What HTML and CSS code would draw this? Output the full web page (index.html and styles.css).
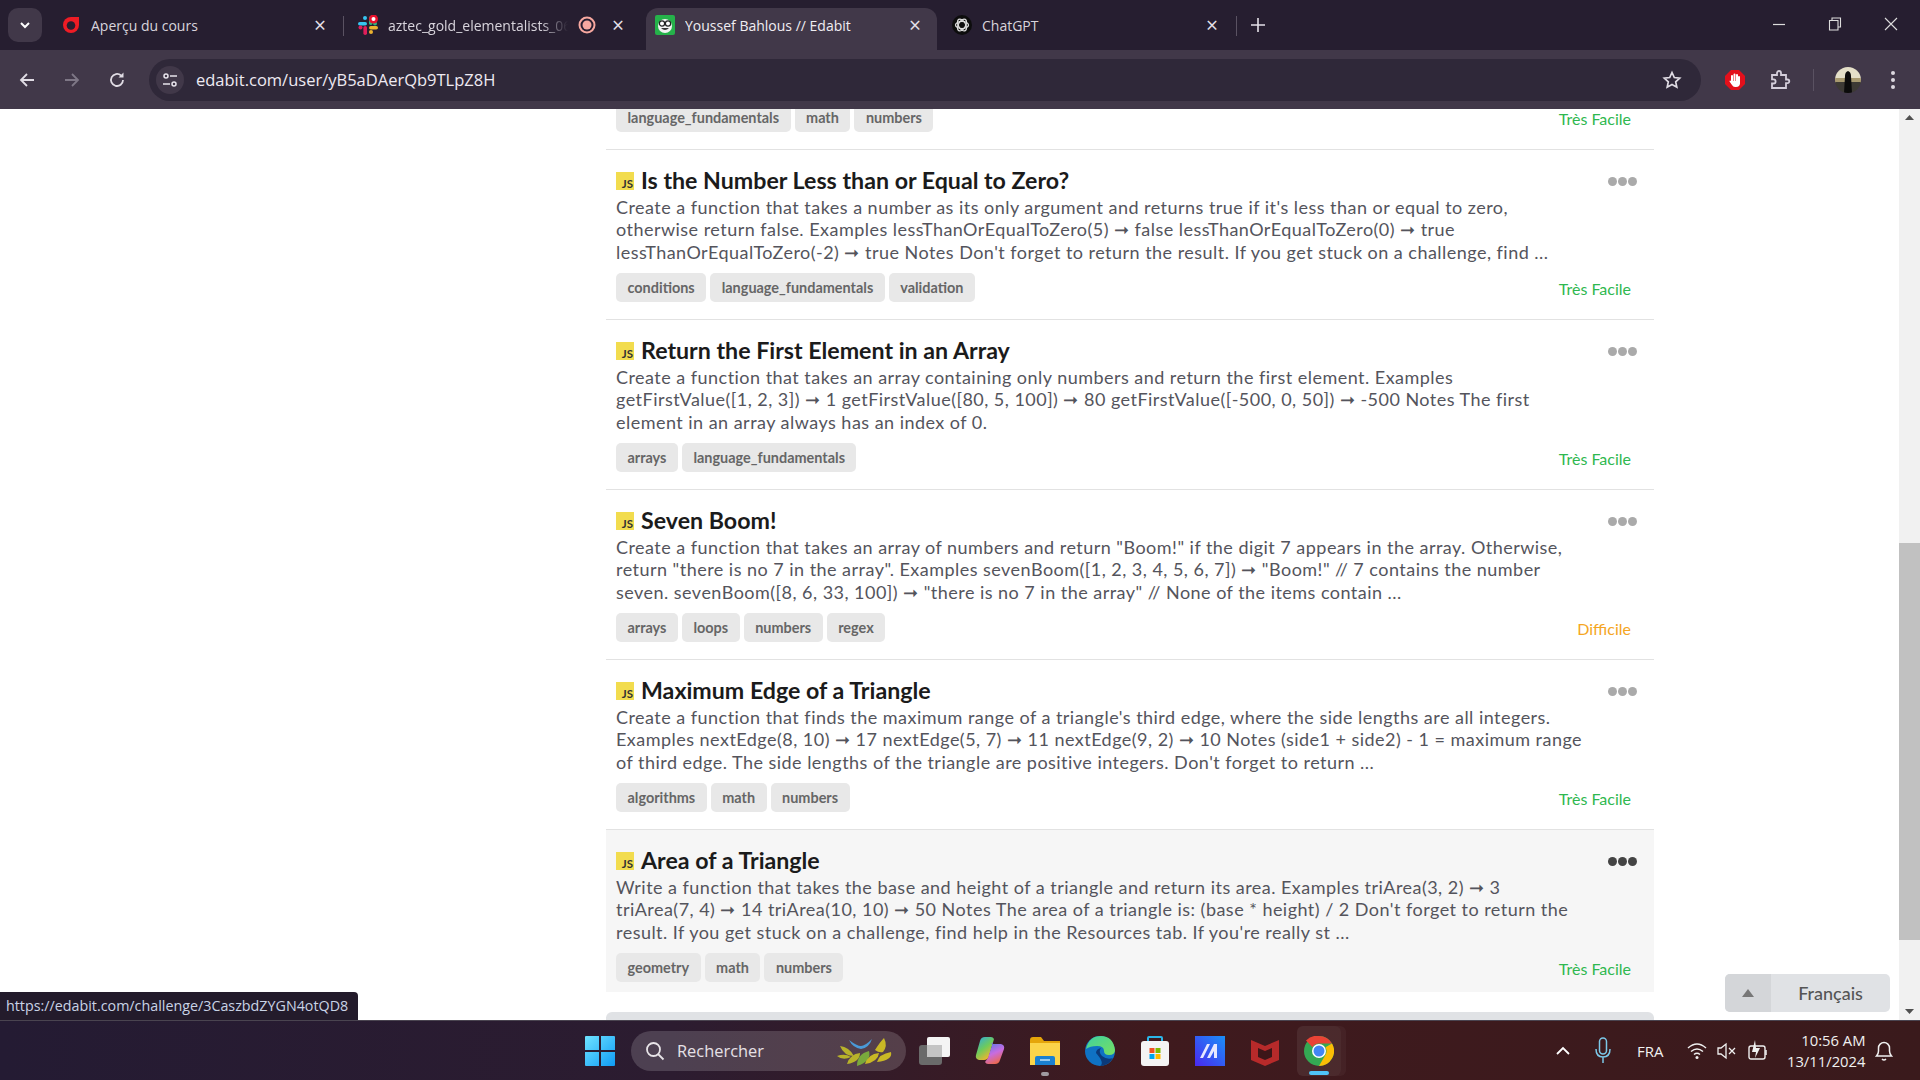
FILE: index.html
```html
<!DOCTYPE html>
<html lang="fr">
<head>
    <meta charset="utf-8">
    <title>Youssef Bahlous // Edabit</title>
    <link rel="stylesheet" href="styles.css">
</head>
<body>
<header class="tabstrip">
    <button class="tab-search"><svg width="12" height="12" viewBox="0 0 12 12"><path d="M2 4l4 4 4-4" fill="none" stroke="#fff" stroke-width="2"/></svg></button>
    <div class="tab tab-one">
        <svg class="favicon" width="20" height="20" viewBox="0 0 20 20"><path d="M18 2v8a8 8 0 1 1-8-8z" fill="#ee1c25"/><circle cx="10" cy="10.500" r="4.300" fill="#261e30"/></svg>
        <span class="tab-title">Aperçu du cours</span>
        <span class="tab-x">×</span>
    </div>
    <i class="tab-sep"></i>
    <div class="tab tab-two">
        <svg class="favicon" width="20" height="20" viewBox="0 0 20 20">
            <rect x="0" y="7" width="9" height="3.600" rx="1.800" fill="#36c5f0"/><circle cx="7" cy="3" r="2" fill="#36c5f0"/>
            <rect x="11" y="1" width="3.600" height="9" rx="1.800" fill="#2eb67d"/><circle cx="17" cy="8.500" r="2" fill="#2eb67d"/>
            <rect x="11" y="11" width="9" height="3.600" rx="1.800" fill="#ecb22e"/><circle cx="13" cy="17" r="2" fill="#ecb22e"/>
            <rect x="5.400" y="11" width="3.600" height="9" rx="1.800" fill="#e01e5a"/><circle cx="2.500" cy="12.500" r="2" fill="#e01e5a"/>
            <circle cx="15.500" cy="4" r="4.500" fill="#e8112d"/><circle cx="15.500" cy="4" r="2" fill="#fff"/>
        </svg>
        <span class="tab-title tab-fade">aztec_gold_elementalists_06</span>
        <svg class="tab-rec" width="18" height="18" viewBox="0 0 18 18"><circle cx="9" cy="9" r="7.500" fill="none" stroke="#f7a8a0" stroke-width="2"/><circle cx="9" cy="9" r="4.500" fill="#f7a8a0"/></svg>
        <span class="tab-x">×</span>
    </div>
    <div class="tab tab-active">
        <svg class="favicon" width="20" height="20" viewBox="0 0 20 20"><rect width="20" height="20" rx="2" fill="#25b24a"/><circle cx="10" cy="11" r="7" fill="#f4f4f4"/><circle cx="7" cy="8.500" r="2.600" fill="#fff" stroke="#222" stroke-width="1.200"/><circle cx="13" cy="8.500" r="2.600" fill="#fff" stroke="#222" stroke-width="1.200"/><path d="M6 13q4 4 8 0" fill="#333"/></svg>
        <span class="tab-title">Youssef Bahlous // Edabit</span>
        <span class="tab-x">×</span>
    </div>
    <div class="tab tab-four">
        <svg class="favicon" width="20" height="20" viewBox="0 0 20 20"><circle cx="10" cy="10" r="10" fill="#0d0d0d"/><g fill="none" stroke="#ddd" stroke-width="1.300"><ellipse cx="10" cy="10" rx="6.500" ry="3.600"/><ellipse cx="10" cy="10" rx="6.500" ry="3.600" transform="rotate(60 10 10)"/><ellipse cx="10" cy="10" rx="6.500" ry="3.600" transform="rotate(120 10 10)"/></g></svg>
        <span class="tab-title">ChatGPT</span>
        <span class="tab-x">×</span>
    </div>
    <i class="tab-sep"></i>
    <svg class="new-tab" width="14" height="14" viewBox="0 0 14 14"><path d="M7 0v14M0 7h14" stroke="#e4e0e8" stroke-width="1.600"/></svg>
    <div class="window-controls">
        <svg width="14" height="14" viewBox="0 0 14 14"><path d="M1 7.500h12" stroke="#ddd" stroke-width="1.200"/></svg>
        <svg width="14" height="14" viewBox="0 0 14 14"><path d="M1.500 3.500h8.500v9.500h-8.500zM4 3.500v-2.500h8.500v9h-2.500" fill="none" stroke="#ddd" stroke-width="1.100"/></svg>
        <svg width="14" height="14" viewBox="0 0 14 14"><path d="M1 1l12 12M13 1L1 13" stroke="#ddd" stroke-width="1.100"/></svg>
    </div>
</header>

<nav class="toolbar">
    <svg class="tool-back" width="18" height="18" viewBox="0 0 18 18"><path d="M16 9H3M9 3L3 9l6 6" fill="none" stroke="#e0dce4" stroke-width="1.800"/></svg>
    <svg class="tool-forward" width="18" height="18" viewBox="0 0 18 18"><path d="M2 9h13M9 3l6 6-6 6" fill="none" stroke="#7e7786" stroke-width="1.800"/></svg>
    <svg class="tool-reload" width="18" height="18" viewBox="0 0 18 18"><path d="M15 9a6 6 0 1 1-2-4.500" fill="none" stroke="#e0dce4" stroke-width="1.800"/><path d="M15.500 1.500v5h-5z" fill="#e0dce4"/></svg>
    <div class="omnibox">
        <span class="site-info"><svg width="16" height="16" viewBox="0 0 16 16"><g fill="none" stroke="#e8e4ec" stroke-width="1.500"><circle cx="4" cy="4" r="2"/><path d="M8 4h7M1 12h7"/><circle cx="12" cy="12" r="2"/></g></svg></span>
        <span class="url">edabit.com/user/yB5aDAerQb9TLpZ8H</span>
        <svg class="star" width="20" height="20" viewBox="0 0 20 20"><path d="M10 2.500l2.300 5 5.400.6-4 3.700 1.100 5.400L10 14.500l-4.800 2.700 1.100-5.400-4-3.700 5.400-.6z" fill="none" stroke="#e0dce4" stroke-width="1.700"/></svg>
    </div>
    <svg class="ext-stop" width="22" height="22" viewBox="0 0 22 22"><path d="M7 1h8l6 6v8l-6 6H7l-6-6V7z" fill="#e3101b"/><g stroke="#fff" stroke-width="2" stroke-linecap="round"><path d="M8 7v7M10.500 5.500v7M13 6v7M15 8v6"/></g><path d="M7 12h9v2q0 4-4 4h-1q-2 0-3-2l-2.500-3.500q0-1.500 1.500-.5z" fill="#fff"/></svg>
    <svg class="ext-puzzle" width="22" height="22" viewBox="0 0 22 22"><path d="M3 6h5V4a2 2 0 0 1 4 0v2h5v4.500h1.500a1.800 1.800 0 0 1 0 3.600H17V19H3v-4.500h1.500a2 2 0 0 0 0-4.200H3z" fill="none" stroke="#d4cedb" stroke-width="1.800"/></svg>
    <i class="tool-sep"></i>
    <svg class="avatar" width="26" height="26" viewBox="0 0 26 26"><defs><clipPath id="av"><circle cx="13" cy="13" r="13"/></clipPath></defs><g clip-path="url(#av)"><rect width="26" height="13" fill="#e4dfc8"/><rect y="11" width="26" height="5" fill="#a89a70"/><rect y="15" width="26" height="11" fill="#3d3a35"/><path d="M13 4q3 1 3 5l1 17H9l1-17q0-4 3-5z" fill="#0b0b0b"/></g></svg>
    <svg class="menu-dots" width="6" height="20" viewBox="0 0 6 20"><g fill="#dcd8e0"><circle cx="3" cy="3" r="2"/><circle cx="3" cy="10" r="2"/><circle cx="3" cy="17" r="2"/></g></svg>
</nav>

<div class="viewport">
    <div class="sidebar"></div>
    <main class="content">
        <div class="row-wrap first">
            <div class="tags-line">
                <div class="tags"><span class="tag">language_fundamentals</span><span class="tag">math</span><span class="tag">numbers</span></div>
                <span class="level easy">Très Facile</span>
            </div>
        </div>

        <div class="row-wrap">
            <article class="row">
                <div class="title-line"><h3><span class="js-badge">JS</span>Is the Number Less than or Equal to Zero?</h3><span class="dots"><i></i><i></i><i></i></span></div>
                <p class="desc">Create a function that takes a number as its only argument and returns true if it's less than or equal to zero,<br>otherwise return false. Examples lessThanOrEqualToZero(5) ➞ false lessThanOrEqualToZero(0) ➞ true<br>lessThanOrEqualToZero(-2) ➞ true Notes Don't forget to return the result. If you get stuck on a challenge, find ...</p>
                <div class="tags-line">
                    <div class="tags"><span class="tag">conditions</span><span class="tag">language_fundamentals</span><span class="tag">validation</span></div>
                    <span class="level easy">Très Facile</span>
                </div>
            </article>
        </div>

        <div class="row-wrap">
            <article class="row">
                <div class="title-line"><h3><span class="js-badge">JS</span>Return the First Element in an Array</h3><span class="dots"><i></i><i></i><i></i></span></div>
                <p class="desc">Create a function that takes an array containing only numbers and return the first element. Examples<br>getFirstValue([1, 2, 3]) ➞ 1 getFirstValue([80, 5, 100]) ➞ 80 getFirstValue([-500, 0, 50]) ➞ -500 Notes The first<br>element in an array always has an index of 0.</p>
                <div class="tags-line">
                    <div class="tags"><span class="tag">arrays</span><span class="tag">language_fundamentals</span></div>
                    <span class="level easy">Très Facile</span>
                </div>
            </article>
        </div>

        <div class="row-wrap">
            <article class="row">
                <div class="title-line"><h3><span class="js-badge">JS</span>Seven Boom!</h3><span class="dots"><i></i><i></i><i></i></span></div>
                <p class="desc">Create a function that takes an array of numbers and return "Boom!" if the digit 7 appears in the array. Otherwise,<br>return "there is no 7 in the array". Examples sevenBoom([1, 2, 3, 4, 5, 6, 7]) ➞ "Boom!" // 7 contains the number<br>seven. sevenBoom([8, 6, 33, 100]) ➞ "there is no 7 in the array" // None of the items contain ...</p>
                <div class="tags-line">
                    <div class="tags"><span class="tag">arrays</span><span class="tag">loops</span><span class="tag">numbers</span><span class="tag">regex</span></div>
                    <span class="level hard">Difficile</span>
                </div>
            </article>
        </div>

        <div class="row-wrap">
            <article class="row">
                <div class="title-line"><h3><span class="js-badge">JS</span>Maximum Edge of a Triangle</h3><span class="dots"><i></i><i></i><i></i></span></div>
                <p class="desc">Create a function that finds the maximum range of a triangle's third edge, where the side lengths are all integers.<br>Examples nextEdge(8, 10) ➞ 17 nextEdge(5, 7) ➞ 11 nextEdge(9, 2) ➞ 10 Notes (side1 + side2) - 1 = maximum range<br>of third edge. The side lengths of the triangle are positive integers. Don't forget to return ...</p>
                <div class="tags-line">
                    <div class="tags"><span class="tag">algorithms</span><span class="tag">math</span><span class="tag">numbers</span></div>
                    <span class="level easy">Très Facile</span>
                </div>
            </article>
        </div>

        <div class="row-wrap last">
            <article class="row hovered">
                <div class="title-line"><h3><span class="js-badge">JS</span>Area of a Triangle</h3><span class="dots"><i></i><i></i><i></i></span></div>
                <p class="desc">Write a function that takes the base and height of a triangle and return its area. Examples triArea(3, 2) ➞ 3<br>triArea(7, 4) ➞ 14 triArea(10, 10) ➞ 50 Notes The area of a triangle is: (base * height) / 2 Don't forget to return the<br>result. If you get stuck on a challenge, find help in the Resources tab. If you're really st ...</p>
                <div class="tags-line">
                    <div class="tags"><span class="tag">geometry</span><span class="tag">math</span><span class="tag">numbers</span></div>
                    <span class="level easy">Très Facile</span>
                </div>
            </article>
        </div>

        <div class="next-card"></div>
    </main>
    <div class="scrollbar">
        <svg width="21" height="18" viewBox="0 0 21 18"><path d="M6 11l4.500-5 4.500 5z" fill="#505050"/></svg>
        <div class="thumb-track"><div class="thumb"></div></div>
        <svg width="21" height="18" viewBox="0 0 21 18"><path d="M6 7l4.500 5 4.500-5z" fill="#505050"/></svg>
    </div>

    <div class="status-bubble">https://edabit.com/challenge/3CaszbdZYGN4otQD8</div>
    <div class="lang-select">
        <span class="lang-arrow"><svg width="12" height="8" viewBox="0 0 12 8"><path d="M0 8l6-8 6 8z" fill="#777"/></svg></span>
        <span class="lang-name">Français</span>
    </div>
</div>

<footer class="taskbar">
    <svg class="win-logo" width="30" height="30" viewBox="0 0 30 30"><defs><linearGradient id="winblue" x1="0" y1="0" x2="1" y2="1"><stop offset="0" stop-color="#6fe3ff"/><stop offset="1" stop-color="#0f9cf5"/></linearGradient></defs><path d="M0 1q0-1 1-1h13v14H0zM16 0h13q1 0 1 1v13H16zM0 16h14v14H1q-1 0-1-1zM16 16h14v13q0 1-1 1H16z" fill="url(#winblue)"/></svg>
    <div class="search-pill">
        <svg width="20" height="20" viewBox="0 0 20 20"><circle cx="8.500" cy="8.500" r="6.500" fill="none" stroke="#e8e4e8" stroke-width="1.800"/><path d="M13 13l5.500 5.500" stroke="#e8e4e8" stroke-width="1.800"/></svg>
        <span>Rechercher</span>
        <svg class="search-art" width="58" height="30" viewBox="0 0 58 30">
            <path d="M12 4q8 6 12 6t11-7q-3 9-11 10Q16 12 12 4z" fill="#4a9ad8"/>
            <path d="M3 10q9 1 14 10-10 0-14-10zM0 20q8-3 14 1-8 4-14-1zM10 28q3-10 13-11 0 9-13 11z" fill="#b8b32a"/>
            <path d="M20 30q0-12 12-15 3 10-12 15z" fill="#79a93c"/>
            <path d="M28 28q3-10 14-11-1 9-14 11zM38 14q5-8 9-12 4 8-1 14-4 1-8-2zM40 26q2-8 14-10 2 8-14 10z" fill="#c9b825"/>
        </svg>
    </div>
    <div class="apps">
        <span class="app">
            <svg width="32" height="28" viewBox="0 0 32 28"><rect x="0" y="8" width="23" height="20" rx="3" fill="#6a6a6a"/><rect x="8" y="0" width="23" height="20" rx="2" fill="#f4f4f4"/><rect x="8" y="8" width="15" height="12" fill="#c4c4c4"/></svg>
        </span>
        <span class="app">
            <svg width="30" height="30" viewBox="0 0 30 30"><defs><linearGradient id="cop1" x1="0" y1="0" x2="0.600" y2="1"><stop offset="0" stop-color="#2aa8e8"/><stop offset=".55" stop-color="#6fcb5a"/><stop offset="1" stop-color="#f4b42c"/></linearGradient><linearGradient id="cop2" x1="0.300" y1="0" x2="0.700" y2="1"><stop offset="0" stop-color="#5a78ea"/><stop offset=".5" stop-color="#c86ce0"/><stop offset="1" stop-color="#f0683c"/></linearGradient></defs><path d="M10 1h6q2 0 3 2l-5 17q-1 4-5 4H4q-4-1-3-5L5 5q1-4 5-4z" fill="url(#cop1)"/><path d="M16 8h10q4 1 3 5l-4 11q-1 4-5 4h-7q-2 0-3-2l3-4 5-16z" fill="url(#cop2)"/></svg>
        </span>
        <span class="app has-dot">
            <svg width="30" height="28" viewBox="0 0 30 28"><path d="M0 3q0-3 3-3h8l3 4h16v24H0z" fill="#e5a50a"/><path d="M0 6h30v22H0z" fill="#fbd44a"/><path d="M5 21q0-2 2-2h16q2 0 2 2v7H5z" fill="#1a80d0"/><path d="M10 23h10" stroke="#bfe2fa" stroke-width="1.500"/></svg>
        </span>
        <span class="app">
            <svg width="30" height="30" viewBox="0 0 30 30"><defs><linearGradient id="edge" x1="0" y1="0" x2="1" y2="1"><stop offset="0" stop-color="#3fd0a0"/><stop offset="1" stop-color="#78e060"/></linearGradient></defs><circle cx="15" cy="15" r="15" fill="#0f72c4"/><path d="M1 13Q4 0 16 0q12 0 14 14 0 5-6 5-5 0-5-4 0-5-7-5-7 0-11 3z" fill="url(#edge)"/><path d="M11 17q0-4 5-5-3 4 1 8 5 4 11 2-5 8-13 8 5-3-4-13z" fill="#0b3a7a"/></svg>
        </span>
        <span class="app">
            <svg width="30" height="30" viewBox="0 0 30 30"><path d="M8 6V2q0-1 1-1h12q1 0 1 1v4" fill="none" stroke="#2bb6e8" stroke-width="2"/><rect x="1" y="5" width="28" height="25" rx="3" fill="#f4f4f4"/><rect x="9.500" y="12" width="5" height="5" fill="#f25022"/><rect x="15.500" y="12" width="5" height="5" fill="#7fba00"/><rect x="9.500" y="18" width="5" height="5" fill="#00a4ef"/><rect x="15.500" y="18" width="5" height="5" fill="#ffb900"/></svg>
        </span>
        <span class="app">
            <svg width="30" height="30" viewBox="0 0 30 30"><defs><linearGradient id="ma" x1="0" y1="1" x2="1" y2="0"><stop offset="0" stop-color="#4a28f0"/><stop offset="1" stop-color="#1a90f8"/></linearGradient></defs><rect width="30" height="30" fill="url(#ma)"/><path d="M5 22L12 8h3L8 22zM12 22L19 8h3v14h-3v-7l-4 7z" fill="#e6e8ff"/></svg>
        </span>
        <span class="app">
            <svg width="28" height="30" viewBox="0 0 28 30"><path d="M0 4l14 6 14-6v20l-14 6-14-6z" fill="#b72a2a"/><path d="M7 12l7 3 7-3v9l-7 3-7-3z" fill="#3d1618"/></svg>
        </span>
        <span class="app running">
            <svg width="30" height="30" viewBox="0 0 30 30"><circle cx="15" cy="15" r="15" fill="#34a853"/><path d="M15 0a15 15 0 0 1 13 7.500H15a7.500 7.500 0 0 0-6.500 3.750L2 4.500A15 15 0 0 1 15 0z" fill="#ea4335"/><path d="M28 7.500A15 15 0 0 1 15 30l6.500-11.250a7.500 7.500 0 0 0 0-7.500z" fill="#fbbc05"/><circle cx="15" cy="15" r="7" fill="#fff"/><circle cx="15" cy="15" r="5.500" fill="#4285f4"/></svg>
        </span>
    </div>
    <div class="tray">
        <svg class="tray-up" width="16" height="10" viewBox="0 0 16 10"><path d="M2 8l6-6 6 6" fill="none" stroke="#fff" stroke-width="1.800"/></svg>
        <svg class="tray-mic" width="16" height="28" viewBox="0 0 16 28"><rect x="4.500" y="1" width="7" height="16" rx="3.500" fill="none" stroke="#7cc8e8" stroke-width="1.500"/><path d="M1 12q0 8 7 8t7-8M8 20v6" fill="none" stroke="#7cc8e8" stroke-width="1.500"/></svg>
        <span class="tray-lang">FRA</span>
        <svg class="tray-wifi" width="20" height="18" viewBox="0 0 20 18"><g fill="none" stroke="#f0f0f0" stroke-width="1.500"><path d="M1 6q9-8 18 0M4 9.500q6-5 12 0M7 12.500q3-2.500 6 0"/></g><circle cx="10" cy="15.500" r="1.500" fill="#f0f0f0"/></svg>
        <svg class="tray-vol" width="20" height="18" viewBox="0 0 20 18"><path d="M1 6h3l5-4v14l-5-4H1z" fill="none" stroke="#f0f0f0" stroke-width="1.300"/><path d="M12 6l6 6M18 6l-6 6" stroke="#f0f0f0" stroke-width="1.300"/></svg>
        <svg class="tray-bat" width="20" height="24" viewBox="0 0 20 24"><rect x="1" y="7" width="16" height="13" rx="2" fill="none" stroke="#f0f0f0" stroke-width="1.400"/><path d="M18 11v5" stroke="#f0f0f0" stroke-width="1.500"/><path d="M7 1L4 13h4l-1 6 5-10H8z" fill="#f0f0f0"/></svg>
        <div class="clock"><span>10:56 AM</span><span>13/11/2024</span></div>
        <svg class="tray-bell" width="18" height="22" viewBox="0 0 18 22"><path d="M1.500 16q2-2 2-5V8a5.500 5.500 0 0 1 11 0v3q0 3 2 5zM7 19q2 2 4 0" fill="none" stroke="#f0f0f0" stroke-width="1.500"/></svg>
    </div>
</footer>
</body>
</html>
```

FILE: styles.css
```css
* {
    box-sizing: border-box;
}
html, body {
    height: 100%;
    margin: 0;
    overflow: hidden;
}
body {
    display: flex;
    flex-direction: column;
    font-family: "Lato", "Liberation Sans", sans-serif;
    background: #fff;
}

/* browser tabs */
.tabstrip {
    display: flex;
    align-items: flex-end;
    flex: 0 0 50px;
    padding-left: 8px;
    background: #261e30;
    font-family: "Open Sans", "Liberation Sans", sans-serif;
    font-size: 14px;
    color: #d8d4dc;
}
.tab-search {
    display: flex;
    align-items: center;
    justify-content: center;
    width: 34px;
    height: 34px;
    margin: 0 0 8px;
    padding: 0;
    border: none;
    border-radius: 10px;
    background: #413849;
}
.tab {
    display: flex;
    align-items: center;
    height: 42px;
    padding-bottom: 8px;
}
.tab-one {
    width: 290px;
    margin-left: 11px;
    padding-left: 8px;
}
.tab-two {
    width: 302px;
    padding-left: 14px;
}
.tab-active {
    width: 291px;
    padding-left: 9px;
    border-radius: 12px 12px 0 0;
    background: #413849;
    color: #f0edf2;
}
.tab-four {
    width: 299px;
    padding-left: 15px;
}
.favicon {
    flex: none;
    margin-right: 10px;
}
.tab-title {
    flex: 1;
    overflow: hidden;
    white-space: nowrap;
}
.tab-fade {
    flex: none;
    width: 180px;
    -webkit-mask-image: linear-gradient(to right, #000 85%, transparent);
}
.tab-rec {
    margin-left: 10px;
}
.tab-x {
    flex: none;
    width: 24px;
    font-size: 21px;
    line-height: 22px;
    text-align: center;
    color: #e4e0e8;
}
.tab-one .tab-x {
    margin-right: 11px;
}
.tab-two .tab-x {
    margin: 0 16px 0 10px;
}
.tab-active .tab-x {
    margin-right: 10px;
}
.tab-four .tab-x {
    margin-right: 12px;
}
.tab-sep {
    flex: none;
    width: 1px;
    height: 20px;
    margin-bottom: 14px;
    background: #5a5262;
}
.new-tab {
    margin: 0 0 18px 14px;
}
.window-controls {
    display: flex;
    gap: 42px;
    margin-left: auto;
    padding: 0 22px 19px 0;
}

/* address bar */
.toolbar {
    display: flex;
    align-items: center;
    flex: 0 0 59px;
    padding-left: 18px;
    background: #413849;
}
.tool-back, .tool-forward {
    margin-right: 27px;
}
.tool-reload {
    margin-right: 23px;
}
.omnibox {
    display: flex;
    align-items: center;
    width: 1552px;
    height: 42px;
    padding: 0 19px 0 7px;
    border-radius: 21px;
    background: #2f2839;
}
.site-info {
    display: flex;
    align-items: center;
    justify-content: center;
    width: 28px;
    height: 28px;
    margin-right: 12px;
    border-radius: 50%;
    background: #413849;
}
.url {
    flex: 1;
    font-family: "Open Sans", "Liberation Sans", sans-serif;
    font-size: 16.5px;
    color: #eeeaf2;
}
.ext-stop {
    margin-left: 23px;
}
.ext-puzzle {
    margin-left: 23px;
}
.tool-sep {
    width: 1px;
    height: 22px;
    margin: 0 21px 0 22px;
    background: #5a5262;
}
.menu-dots {
    margin-left: 29px;
}

/* page area */
.viewport {
    position: relative;
    display: flex;
    flex: 1;
    min-height: 0;
    overflow: hidden;
    background: #fff;
}
.sidebar {
    flex: 0 0 606px;
}
.content {
    flex: 0 0 1048px;
}
.row-wrap {
    padding-bottom: 7px;
    border-bottom: 1px solid #e2e2e2;
}
.row-wrap.first {
    padding: 0 23px 17px 10px;
    margin-top: -6px;
    height: 47px;
}
.row-wrap.first .tags-line {
    margin-top: 0;
    padding-right: 0;
}
.row-wrap.last {
    padding-bottom: 0;
    border-bottom: none;
}
.row {
    padding: 15px 0 10px 10px;
}
.row.hovered {
    background: #f6f6f6;
}
.title-line {
    display: flex;
    align-items: center;
    justify-content: space-between;
    height: 30px;
    padding-right: 17px;
}
h3 {
    display: flex;
    align-items: center;
    margin: 0;
    font-size: 23.2px;
    font-weight: 700;
    color: #1b1b1b;
}
.js-badge {
    display: flex;
    align-items: flex-end;
    justify-content: flex-end;
    width: 18px;
    height: 18px;
    margin: 2px 7px 0 0;
    padding: 0 1px 0 0;
    background: #f2dc4e;
    font-size: 11.5px;
    line-height: 12px;
    font-weight: 700;
    color: #333;
}
.dots {
    display: flex;
    gap: 1px;
    margin-top: 2px;
}
.dots i {
    width: 9px;
    height: 9px;
    border-radius: 50%;
    background: #aaa;
}
.hovered .dots i {
    background: #444;
}
.desc {
    width: 1000px;
    margin: 0.5px 0 0;
    font-size: 18px;
    letter-spacing: 0.47px;
    line-height: 22.5px;
    white-space: nowrap;
    color: #54545c;
}
.tags-line {
    display: flex;
    align-items: center;
    justify-content: space-between;
    margin-top: 10px;
    padding-right: 23px;
}
.tags {
    display: flex;
    gap: 4px;
}
.tag {
    height: 29px;
    padding: 0 11.5px;
    border-radius: 5px;
    background: #e8e8e8;
    font-size: 14.45px;
    line-height: 29px;
    font-weight: 700;
    color: #666;
}
.level {
    margin-top: 2px;
    font-size: 16px;
}
.easy {
    color: #2fb84f;
}
.hard {
    color: #f5a623;
}
.next-card {
    height: 30px;
    margin-top: 20px;
    border-radius: 6px 6px 0 0;
    background: #e0e2e5;
}

/* scrollbar */
.scrollbar {
    display: flex;
    flex-direction: column;
    flex: 0 0 21px;
    margin-left: auto;
    background: #f1f1f1;
}
.thumb-track {
    flex: 1;
    padding-top: 416px;
}
.thumb {
    height: 397px;
    background: #c1c1c1;
}

/* overlays */
.status-bubble {
    position: absolute;
    left: 0;
    bottom: 0;
    width: 358px;
    height: 28px;
    padding-left: 6px;
    border-radius: 0 4px 0 0;
    background: #231b2b;
    font-family: "Open Sans", "Liberation Sans", sans-serif;
    font-size: 14.3px;
    line-height: 28px;
    color: #c9d3e6;
}
.lang-select {
    position: absolute;
    left: 1725px;
    top: 865px;
    display: flex;
    width: 165px;
    height: 38px;
    border-radius: 5px;
    overflow: hidden;
    background: #e0e2e5;
}
.lang-arrow {
    display: flex;
    align-items: center;
    justify-content: center;
    width: 46px;
    background: #d4d6d9;
}
.lang-name {
    flex: 1;
    font-size: 18px;
    line-height: 38px;
    font-weight: 500;
    text-align: center;
    color: #555;
}

/* windows taskbar */
.taskbar {
    display: flex;
    align-items: center;
    flex: 0 0 60px;
    padding-left: 585px;
    border-top: 1px solid #4a4450;
    background: linear-gradient(to right, #241b33 0%, #2c1c30 35%, #3f1a1e 60%, #3a1a1c 100%);
    color: #f0f0f0;
    font-family: "Open Sans", "Liberation Sans", sans-serif;
}
.search-pill {
    display: flex;
    align-items: center;
    width: 275px;
    height: 40px;
    margin-left: 16px;
    padding: 0 11px 0 14px;
    border-radius: 20px;
    background: rgba(255, 255, 255, 0.16);
    font-size: 16.4px;
    color: #e6e0e6;
}
.search-pill span {
    flex: 1;
    margin-left: 12px;
}
.apps {
    display: flex;
    align-items: center;
    margin-left: 1px;
}
.app {
    position: relative;
    display: flex;
    align-items: center;
    justify-content: center;
    width: 55px;
    height: 50px;
}
.has-dot::after {
    content: "";
    position: absolute;
    left: 24px;
    bottom: 0;
    width: 8px;
    height: 4px;
    border-radius: 2px;
    background: #a09aa0;
}
.running {
    width: 44px;
    margin-left: 5px;
    border-radius: 6px;
    background: rgba(255, 255, 255, 0.07);
    box-shadow: 5px 0 0 rgba(255, 255, 255, 0.04);
}
.running::after {
    content: "";
    position: absolute;
    left: 12px;
    bottom: 1px;
    width: 20px;
    height: 4px;
    border-radius: 2px;
    background: #4fc3f7;
}
.tray {
    display: flex;
    align-items: center;
    margin-left: 214px;
}
.tray-mic {
    margin-left: 24px;
}
.tray-lang {
    margin-left: 26px;
    font-size: 15px;
}
.tray-wifi {
    margin-left: 24px;
}
.tray-vol {
    margin-left: 10px;
}
.tray-bat {
    margin-left: 11px;
}
.clock {
    display: flex;
    flex-direction: column;
    align-items: flex-end;
    width: 90px;
    margin-left: 7px;
    font-size: 14.8px;
    line-height: 21px;
}
.tray-bell {
    margin-left: 10px;
}
```
